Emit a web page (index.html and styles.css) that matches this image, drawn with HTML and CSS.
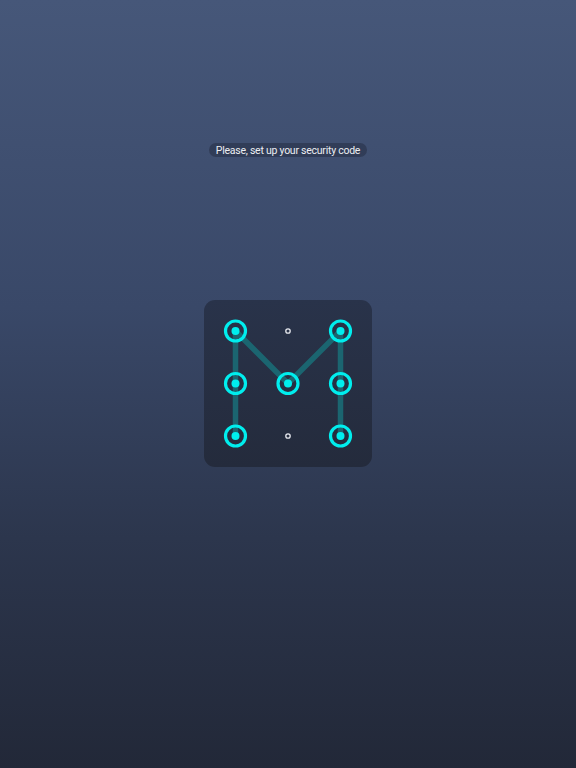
FILE: index.html
```html
<!DOCTYPE html>
<html>
<head>
<meta charset="utf-8">
<link rel="stylesheet" href="styles.css">
</head>
<body>
<main class="screen">
  <div class="prompt">Please, set up your security code</div>
  <div class="pad">
    <svg class="pattern" width="168" height="167" viewBox="0 0 168 167">
      <g class="lines" fill="none" stroke="#1b6570" stroke-width="5.5" stroke-linecap="round" stroke-linejoin="round">
        <polyline points="31.5,136 31.5,31 84,83.5 136.5,31 136.5,136"/>
      </g>
      <g class="rings" fill="none" stroke="#00eeee" stroke-width="3.2">
        <circle cx="31.5" cy="31" r="10"/>
        <circle cx="136.5" cy="31" r="10"/>
        <circle cx="31.5" cy="83.5" r="10"/>
        <circle cx="84" cy="83.5" r="10"/>
        <circle cx="136.5" cy="83.5" r="10"/>
        <circle cx="31.5" cy="136" r="10"/>
        <circle cx="136.5" cy="136" r="10"/>
      </g>
      <g class="cores" fill="#00eeee">
        <circle cx="31.5" cy="31" r="4"/>
        <circle cx="136.5" cy="31" r="4"/>
        <circle cx="31.5" cy="83.5" r="4"/>
        <circle cx="84" cy="83.5" r="4"/>
        <circle cx="136.5" cy="83.5" r="4"/>
        <circle cx="31.5" cy="136" r="4"/>
        <circle cx="136.5" cy="136" r="4"/>
      </g>
      <g class="idle" fill="none" stroke="#e6e8ee" stroke-width="1.3">
        <circle cx="84" cy="31" r="2.2"/>
        <circle cx="84" cy="136" r="2.2"/>
      </g>
    </svg>
  </div>
</main>
</body>
</html>
```
FILE: styles.css
```css
html, body {
  margin: 0;
  padding: 0;
}
body {
  width: 576px;
  height: 768px;
  overflow: hidden;
  background: linear-gradient(to bottom, #465779 0%, #394868 40%, #2c364d 70%, #222838 100%);
  font-family: Roboto, "Liberation Sans", Arial, sans-serif;
}
.screen {
  display: flex;
  flex-direction: column;
  align-items: center;
  padding-top: 143px;
}
.prompt {
  height: 14px;
  line-height: 15px;
  padding: 0 7px;
  border-radius: 7px;
  background: rgba(30, 38, 58, 0.45);
  color: #eceef2;
  font-size: 10.5px;
  letter-spacing: -0.25px;
  white-space: nowrap;
}
.pad {
  margin-top: 143px;
  width: 168px;
  height: 167px;
  border-radius: 11px;
  background: linear-gradient(to bottom, #29334a, #242b3c);
}
.pattern {
  display: block;
}
```
